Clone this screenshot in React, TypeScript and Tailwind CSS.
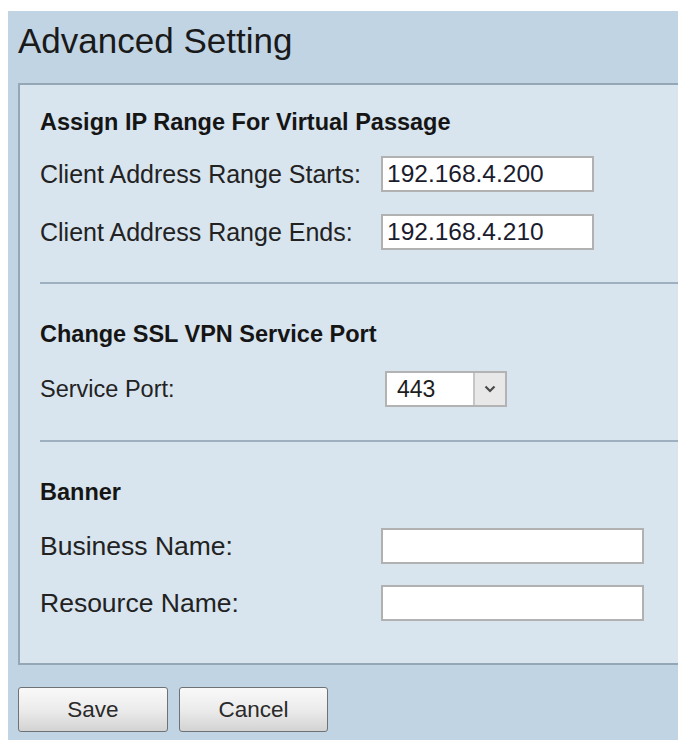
import React from 'react';

type TextRowProps = {
  label: string;
  value?: string;
  width: string;
  labelSize?: string;
  className?: string;
};

// label on the left, text box starting at a fixed column
const TextRow: React.FC<TextRowProps> = ({ label, value = '', width, labelSize = 'text-[25px]', className = '' }) => (
  <div className={`flex h-[36px] items-center ${className}`}>
    <label className={`w-[341px] shrink-0 leading-[28px] text-[#222] ${labelSize}`}>{label}</label>
    <input
      type="text"
      defaultValue={value}
      className={`h-[36px] ${width} border-2 border-[#b1b1b1] bg-white px-[4px] text-[24.5px] leading-[30px] text-[#1b1b2e] outline-none`}
    />
  </div>
);

const SectionTitle: React.FC<{ children: React.ReactNode; className?: string }> = ({ children, className = '' }) => (
  <h2 className={`h-[28px] text-[23.5px] font-bold leading-[28px] text-[#151515] ${className}`}>{children}</h2>
);

const Divider: React.FC<{ className?: string }> = ({ className = '' }) => (
  <div className={`h-[2px] bg-[#9eb0bf] ${className}`} />
);

const PortSelect: React.FC = () => (
  <div className="ml-[4px] flex h-[36px] w-[122px] border-2 border-[#b3b3b3] bg-white">
    <span className="flex-1 pl-[10px] text-[23px] leading-[32px] text-[#1d1d1d]">443</span>
    <span className="flex w-[32px] items-center justify-center border-l-2 border-[#c6c6c6] bg-[#e8e8e8]">
      <svg width="12" height="8" viewBox="0 0 12 8" fill="none">
        <polyline points="1.5,1.5 6,6 10.5,1.5" stroke="#4a4a4a" strokeWidth="2.2" />
      </svg>
    </span>
  </div>
);

const Button: React.FC<{ children: React.ReactNode; className?: string }> = ({ children, className = '' }) => (
  <button
    type="button"
    className={`h-[45px] rounded-[3px] border-[1.5px] border-[#6f7275] bg-linear-to-b from-[#f9f9f9] via-[#ececec] to-[#d3d3d3] text-[22.5px] leading-[28px] text-[#2a2a2a] ${className}`}
  >
    {children}
  </button>
);

export default function App() {
  return (
    <div className="h-[740px] w-[678px] overflow-hidden bg-white pt-[11px] pl-[8px] font-['Liberation_Sans',Arial,sans-serif]">
      <div className="flex h-full flex-col bg-[#c1d4e4] pl-[10px]">
        <h1 className="h-[72px] shrink-0 pt-[12px] text-[35px] leading-[35px] text-[#1a1a1a]">Advanced Setting</h1>

        <div className="h-[582px] shrink-0 border-y-2 border-l-2 border-[#93a7b7] bg-[#d8e4ee] pl-[20px]">
          {/* Assign IP Range */}
          <SectionTitle className="mt-[23px]">Assign IP Range For Virtual Passage</SectionTitle>
          <TextRow className="mt-[20px]" label="Client Address Range Starts:" value="192.168.4.200" width="w-[213px]" />
          <TextRow className="mt-[22px]" label="Client Address Range Ends:" value="192.168.4.210" width="w-[213px]" />

          <Divider className="mt-[32px]" />

          {/* SSL VPN port */}
          <SectionTitle className="mt-[36px]">Change SSL VPN Service Port</SectionTitle>
          <div className="mt-[23px] flex h-[36px] items-center">
            <label className="w-[341px] shrink-0 text-[23.5px] leading-[28px] text-[#222]">Service Port:</label>
            <PortSelect />
          </div>

          <Divider className="mt-[33px]" />

          {/* Banner */}
          <SectionTitle className="mt-[36px]">Banner</SectionTitle>
          <TextRow className="mt-[22px]" label="Business Name:" width="w-[263px]" labelSize="text-[26.5px]" />
          <TextRow className="mt-[21px]" label="Resource Name:" width="w-[263px]" labelSize="text-[26.5px]" />
        </div>

        <div className="mt-[22px] flex gap-[11px]">
          <Button className="w-[150px]">Save</Button>
          <Button className="w-[149px]">Cancel</Button>
        </div>
      </div>
    </div>
  );
}
